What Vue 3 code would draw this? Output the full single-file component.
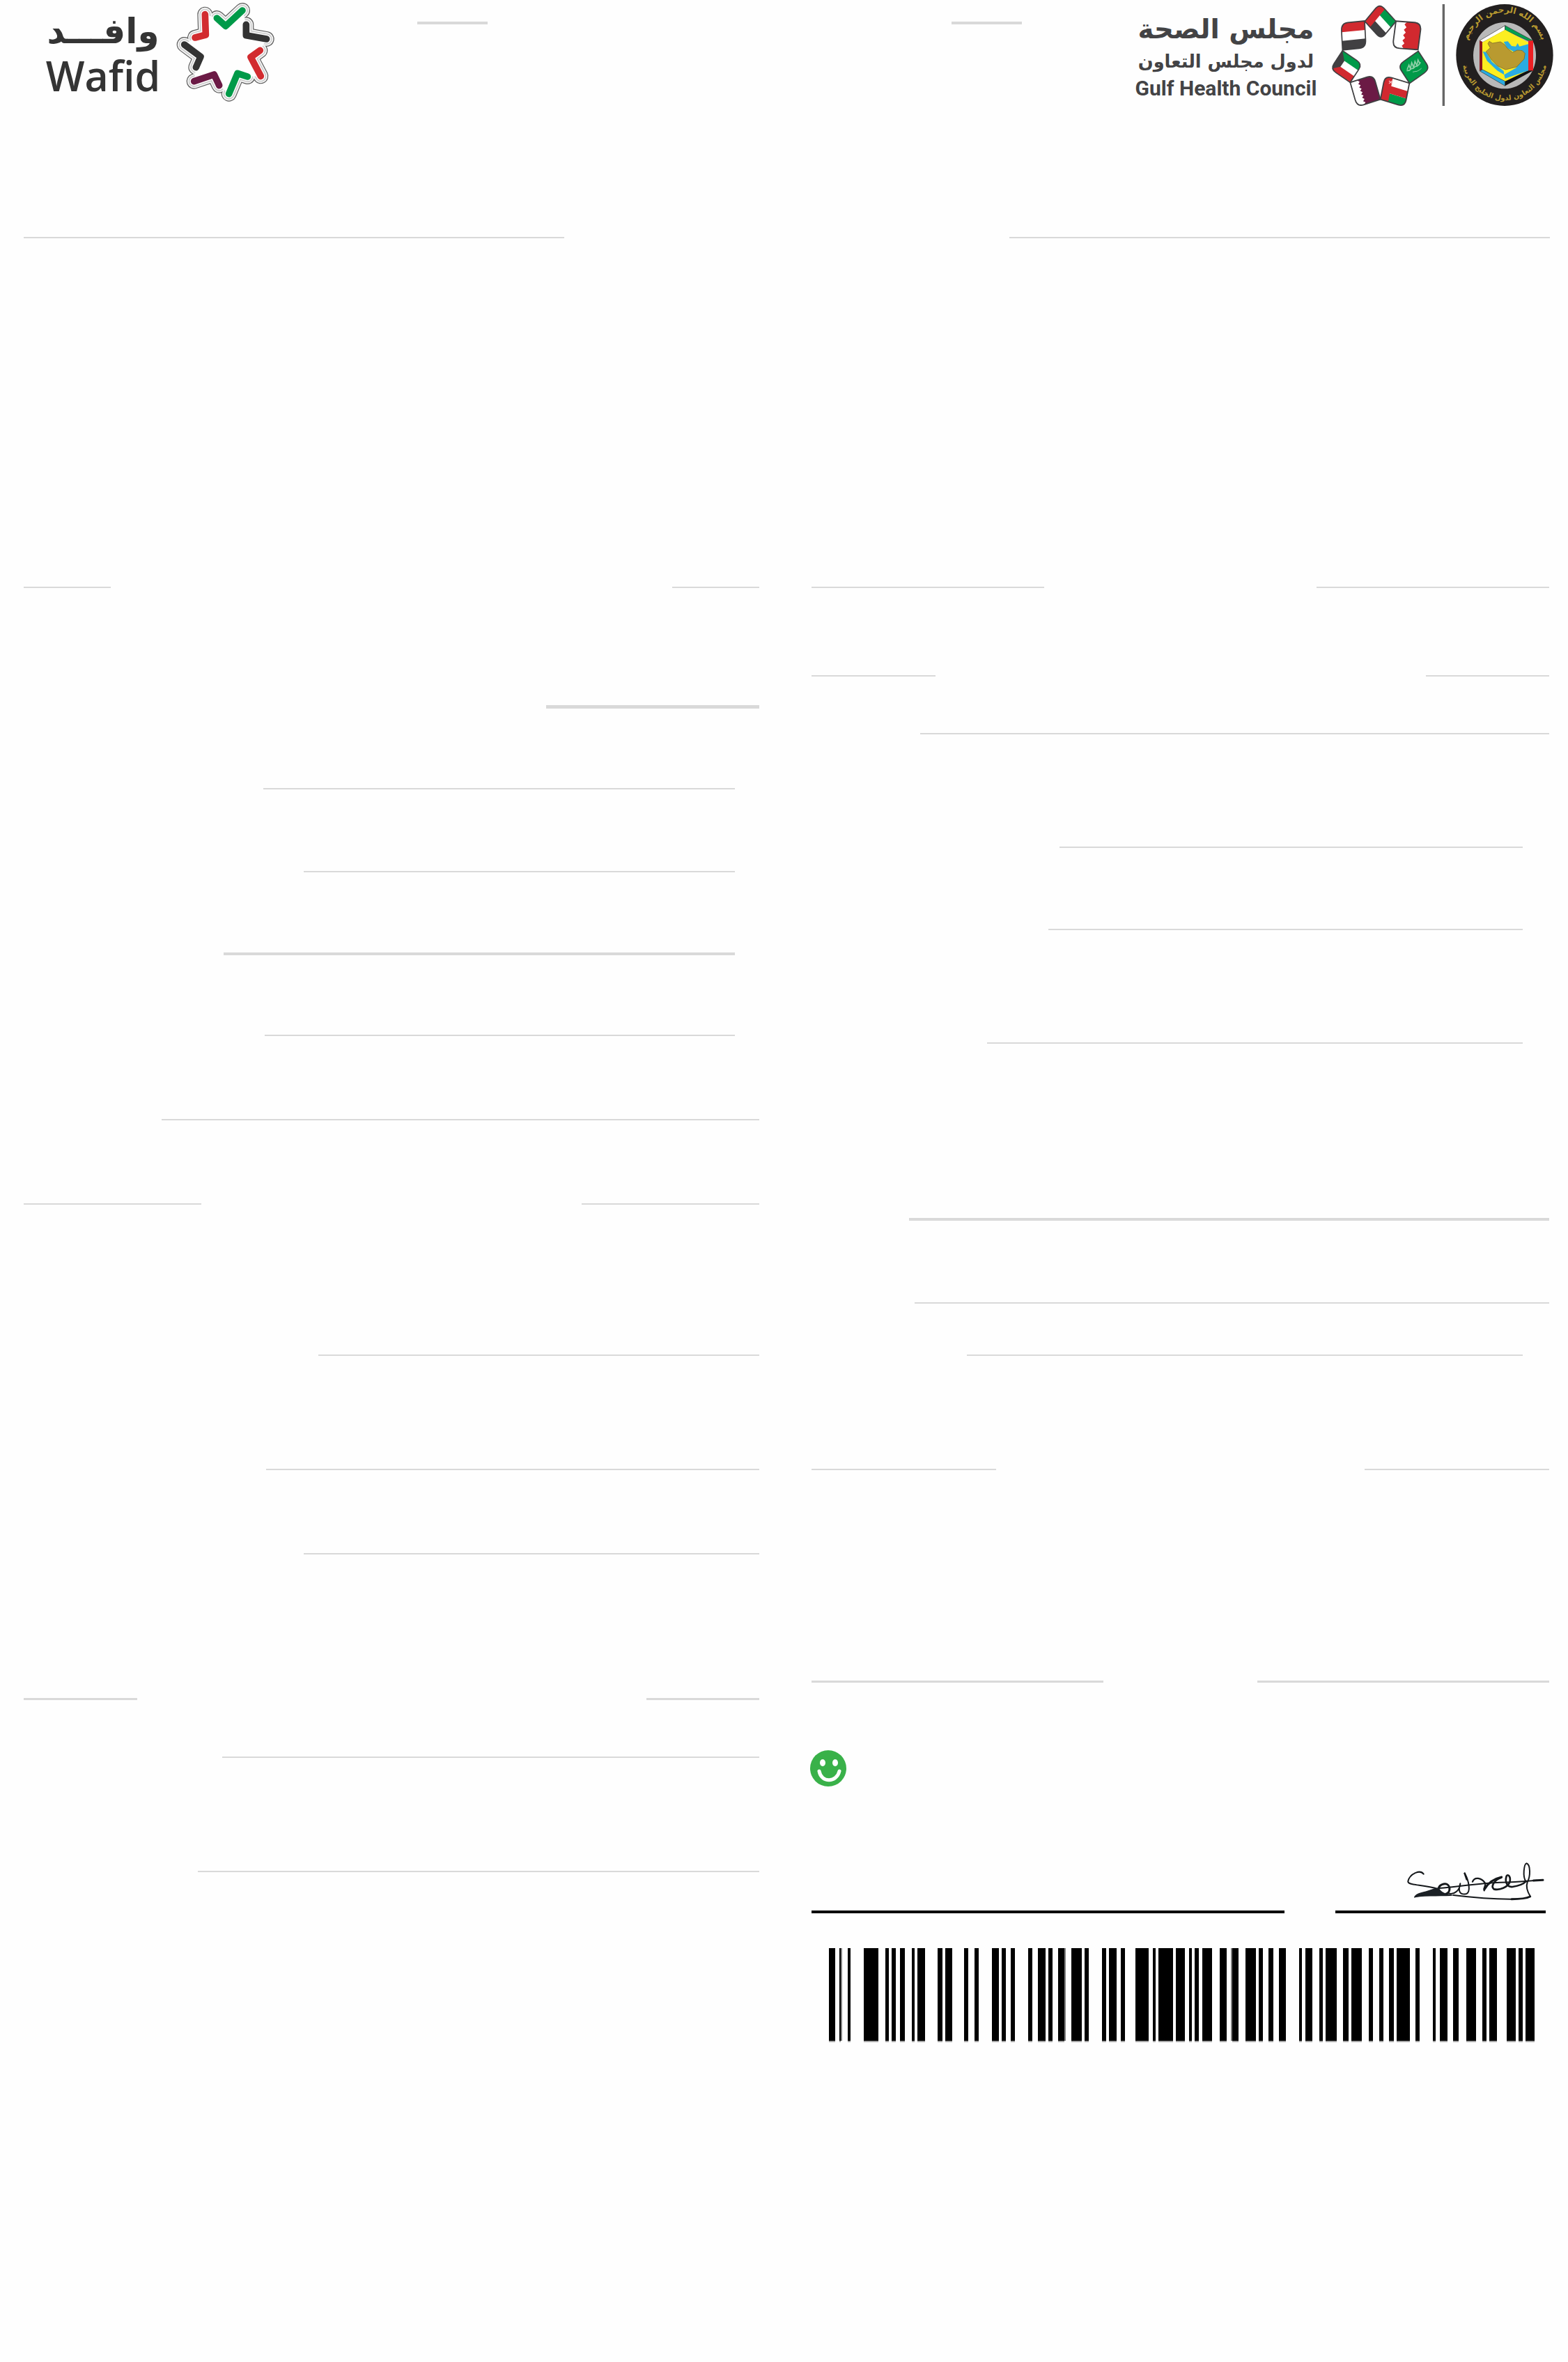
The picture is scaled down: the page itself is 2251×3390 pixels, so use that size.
<script setup>
// Blank form rows: `space` is the empty area above a rule, `weight` its thickness.
// A row with `title` leaves a centred opening; otherwise `lead` and `inset` trim the ends.
const leftRows = [
  { space: 500, weight: 2, title: 806 },
  { space: 168, weight: 5, lead: 750 },
  { space: 114, weight: 2, lead: 344, inset: 35 },
  { space: 117, weight: 2, lead: 402, inset: 35 },
  { space: 115, weight: 4, lead: 287, inset: 35 },
  { space: 114, weight: 2, lead: 346, inset: 35 },
  { space: 119, weight: 2, lead: 198 },
  { space: 119, weight: 2, title: 546 },
  { space: 215, weight: 2, lead: 423 },
  { space: 162, weight: 2, lead: 348 },
  { space: 119, weight: 2, lead: 402 },
  { space: 206, weight: 3, title: 731 },
  { space: 81, weight: 2, lead: 285 },
  { space: 162, weight: 2, lead: 250 },
]

const rightRows = [
  { space: 500, weight: 2, title: 391 },
  { space: 125, weight: 2, title: 704 },
  { space: 81, weight: 2, lead: 156 },
  { space: 161, weight: 2, lead: 356, inset: 38 },
  { space: 116, weight: 2, lead: 340, inset: 38 },
  { space: 161, weight: 2, lead: 252, inset: 38 },
  { space: 250, weight: 4, lead: 140 },
  { space: 117, weight: 2, lead: 148 },
  { space: 73, weight: 2, lead: 223, inset: 38 },
  { space: 162, weight: 2, title: 529 },
  { space: 302, weight: 3, title: 221 },
]

const columns = [leftRows, rightRows]

// Barcode bars as [start, end] in modules.
const bars = [
  [0, 9], [15, 17], [27, 31], [50, 71], [81, 86], [90, 96], [102, 109], [119, 123],
  [127, 138], [156, 163], [167, 177], [194, 200], [209, 215], [234, 244], [248, 254],
  [261, 267], [286, 292], [300, 311], [315, 321], [329, 338], [348, 363], [367, 373],
  [392, 398], [402, 413], [419, 425], [440, 459], [465, 469], [473, 494], [498, 511],
  [517, 521], [525, 531], [536, 550], [561, 571], [579, 588], [598, 613], [617, 623],
  [631, 638], [646, 656], [675, 679], [684, 694], [704, 709], [713, 729], [738, 746],
  [750, 765], [775, 781], [790, 796], [804, 811], [815, 834], [842, 848], [867, 871],
  [877, 888], [896, 904], [915, 929], [938, 944], [948, 959], [973, 986], [990, 996],
  [1000, 1013],
]
const softBars = [[17, 19], [338, 340], [577, 579]]

const chevrons = [
  { d: 'M763 62 L766 150 L720 162', color: '#d22b2f' },
  { d: 'M814 78 L852 112 L924 45', color: '#009a49' },
  { d: 'M940 106 L940 152 L1028 168', color: '#333333' },
  { d: 'M1000 217 L960 246 L1003 328', color: '#d22b2f' },
  { d: 'M946 330 L903 316 L866 404', color: '#009a49' },
  { d: 'M716 350 L802 321 L824 368', color: '#6b1a45' },
  { d: 'M674 192 L744 244 L724 290', color: '#333333' },
]
</script>

<template>
  <main class="page">
    <header class="header">
      <svg class="wafid" viewBox="0 0 1140 480" role="img" aria-label="Wafid">
        <text class="wafid-ar" x="324" y="186" text-anchor="middle">وافـــد</text>
        <text class="wafid-en" x="324" y="392" text-anchor="middle">Wafid</text>
        <g fill="none" stroke-linecap="round" stroke-linejoin="round">
          <path v-for="c in chevrons" :key="'o' + c.d" :d="c.d" stroke="#5c5c5c" stroke-width="66" />
          <path v-for="c in chevrons" :key="'g' + c.d" :d="c.d" stroke="#f4f4f4" stroke-width="59" />
          <path v-for="c in chevrons" :key="'m' + c.d" :d="c.d" stroke="#cccccc" stroke-width="48" />
          <path v-for="c in chevrons" :key="'w' + c.d" :d="c.d" stroke="#fefefe" stroke-width="38" />
        </g>
        <path fill="#fefefe" d="M720 162 L766 150 L763 62 L814 78 L852 112 L924 45 L940 106 L940 152 L1028 168 L1000 217 L960 246 L1003 328 L946 330 L903 316 L866 404 L824 368 L802 321 L716 350 L724 290 L744 244 L674 192Z" />
        <g fill="none" stroke-width="29" stroke-linejoin="round">
          <path v-for="c in chevrons" :key="c.d" :d="c.d" :stroke="c.color" stroke-linecap="round" />
        </g>
      </svg>

      <div class="header-rules">
        <hr class="dash" />
        <hr class="dash" />
      </div>

      <svg class="council" viewBox="-630 0 1863 510" role="img" aria-label="Gulf Health Council">
        <defs>
          <clipPath id="flag">
            <path d="M28 0 L100 0 L100 72 Q100 100 72 100 L0 100 L0 28 Q0 0 28 0Z" />
          </clipPath>
          <path id="flag-edge" d="M28 0 L100 0 L100 72 Q100 100 72 100 L0 100 L0 28 Q0 0 28 0Z" fill="none" stroke="#3f3f41" stroke-width="5" />
          <path id="ring-top" d="M797 190 A167 174 0 0 1 1123 190" />
          <path id="ring-bottom" d="M776 240 A184 192 0 0 0 1144 240" />
        </defs>

        <text class="council-ar big" x="-240" y="166" text-anchor="middle">مجلس الصحة</text>
        <text class="council-ar small" x="-240" y="292" text-anchor="middle">لدول مجلس التعاون</text>
        <text class="council-en" x="-240" y="410" text-anchor="middle">Gulf Health Council</text>

        <!-- United Arab Emirates -->
        <g transform="matrix(-.64 .77 .7 .77 422 15)">
          <g clip-path="url(#flag)">
            <path fill="#fff" d="M0 0H100V100H0z" />
            <path fill="#009a49" d="M0 0H34V100H0z" />
            <path fill="#414042" d="M66 0H100V100H66z" />
            <path fill="#d1292f" d="M0 0H100V32H0z" />
          </g>
          <use href="#flag-edge" />
        </g>
        <!-- Bahrain -->
        <g transform="matrix(-1.1 -.08 -.15 1.15 602 99)">
          <g clip-path="url(#flag)">
            <path fill="#fff" d="M0 0H100V100H0z" />
            <path fill="#d1292f" d="M0 0H56L65 10L56 20L65 30L56 40L65 50L56 60L65 70L56 80L65 90L56 100H0z" />
          </g>
          <use href="#flag-edge" />
        </g>
        <!-- Saudi Arabia -->
        <g transform="matrix(-.5 -.77 -.87 .62 638 297)">
          <g clip-path="url(#flag)"><path fill="#009a49" d="M0 0H100V100H0z" /></g>
          <use href="#flag-edge" />
        </g>
        <g fill="none" stroke="#8fd0a8" stroke-width="5">
          <path d="M540 300 l8 -20 l6 16 l6 -26 l8 20 l6 -26 l8 18 l5 -24 l8 16 M538 304 q12 2 20 -8 q10 0 18 -10 q12 0 22 -18" />
          <path stroke-width="3" d="M564 310 q22 0 38 -16" />
        </g>
        <!-- Oman -->
        <g transform="matrix(.2 -1.02 -1.05 -.32 530 460)">
          <g clip-path="url(#flag)">
            <path fill="#fff" d="M0 0H100V100H0z" />
            <path fill="#009a49" d="M0 0H35V100H0z" />
            <path fill="#d1292f" d="M35 0H66V100H35zM0 68H100V100H0z" />
          </g>
          <use href="#flag-edge" />
        </g>
        <path fill="none" stroke="#f3b8ba" stroke-width="4" d="M462 348l14 12m0-12l-14 12" />
        <!-- Qatar -->
        <g transform="matrix(1 -.32 -.3 -1.05 325 460)">
          <g clip-path="url(#flag)">
            <path fill="#fff" d="M0 0H100V100H0z" />
            <path fill="#6b1a45" d="M100 0H30L38 7L30 14L38 21L30 28L38 35L30 42L38 49L30 56L38 63L30 70L38 77L30 84L38 91L30 100H100z" />
          </g>
          <use href="#flag-edge" />
        </g>
        <!-- Kuwait -->
        <g transform="matrix(.85 .58 .52 -.79 210 297)">
          <g clip-path="url(#flag)">
            <path fill="#fff" d="M0 0H100V100H0z" />
            <path fill="#d1292f" d="M0 0H100V34H0z" />
            <path fill="#009a49" d="M0 66H100V100H0z" />
            <path fill="#414042" d="M0 0L30 34V66L0 100z" />
          </g>
          <use href="#flag-edge" />
        </g>
        <!-- Yemen -->
        <g transform="matrix(.06 1.15 1.01 -.1 256 100)">
          <g clip-path="url(#flag)">
            <path fill="#fff" d="M0 0H100V100H0z" />
            <path fill="#d1292f" d="M0 0H34V100H0z" />
            <path fill="#414042" d="M66 0H100V100H66z" />
          </g>
          <use href="#flag-edge" />
        </g>

        <path fill="#666" d="M692 18H702V456H692z" />

        <!-- Cooperation council emblem -->
        <ellipse cx="960" cy="237" rx="209" ry="219" fill="#221f1f" />
        <ellipse cx="960" cy="239" rx="135" ry="143" fill="#b9b9b9" />
        <text class="ring"><textPath href="#ring-top" startOffset="50%" text-anchor="middle">بسم الله الرحمن الرحيم</textPath></text>
        <text class="ring low"><textPath href="#ring-bottom" startOffset="50%" text-anchor="middle">مجلس التعاون لدول الخليج العربية</textPath></text>
        <path fill="#fff" stroke="#333" stroke-width="2" d="M852 175L962 110V130L866 182z" />
        <path fill="#00a050" stroke="#333" stroke-width="2" d="M962 110L1082 175H1060L962 130z" />
        <path fill="#fcee21" d="M962 128L1062 182V302L962 352L864 302V182z" />
        <path fill="#8b181b" d="M852 175L864 180V302L852 306z" />
        <path fill="#ed2024" d="M1062 175H1083V305H1062z" />
        <path fill="#2aace2" stroke="#333" stroke-width="2" d="M852 305L866 300L962 350V370z" />
        <path fill="#111" d="M962 370V350L1060 304H1083z" />
        <path fill="#2aace2" d="M956 180L974 178L990 198L1008 200L1016 186L1024 200L1062 190V304L962 338L958 322L1010 292L1046 230L1030 216L998 222L970 206zM866 222L880 224L906 266L956 306L958 322L928 304L884 262z" />
        <path fill="#b99a30" stroke="#6d5d28" stroke-width="2" d="M894 178L908 186L942 180L958 190L972 208L994 226L1014 216L1036 218L1048 230L1044 254L1012 288L964 300L930 284L904 258L880 222L898 206L888 188z" />
      </svg>
    </header>

    <div class="banner">
      <hr class="rule" />
      <span class="opening wide"></span>
      <hr class="rule" />
    </div>

    <div class="columns">
      <section v-for="(rows, index) in columns" :key="index" class="column">
        <div
          v-for="(row, i) in rows"
          :key="i"
          class="row"
          :style="{ marginTop: row.space + 'px', height: row.weight + 'px', paddingLeft: (row.lead || 0) + 'px', paddingRight: (row.inset || 0) + 'px' }"
        >
          <hr class="rule" />
          <template v-if="row.title">
            <span class="opening" :style="{ width: row.title + 'px' }"></span>
            <hr class="rule" />
          </template>
        </div>

        <template v-if="index === 1">
          <svg class="smiley" viewBox="0 0 53 53" role="img" aria-label="Fit">
            <circle cx="26" cy="26" r="26" fill="#39b149" />
            <ellipse cx="18" cy="18" rx="4" ry="5" fill="#fff" />
            <ellipse cx="36" cy="18" rx="4" ry="5" fill="#fff" />
            <path d="M13 30C16 47 38 47 42 30" fill="none" stroke="#fff" stroke-width="5" stroke-linecap="round" />
          </svg>

          <div class="sign-row">
            <div class="sign-field"></div>
            <div class="sign-field signed">
              <svg class="signature" viewBox="117 96 600 168" role="img" aria-label="Signature">
                <g fill="none" stroke="#15181b" stroke-width="6" stroke-linecap="round" stroke-linejoin="round">
                  <path d="M191 149C176 128 132 148 124 180C122 200 190 192 252 213" />
                  <path stroke-width="9" d="M254 216C258 190 296 182 302 206C306 226 294 236 276 236" />
                  <path d="M298 232C326 240 348 216 349 190C338 226 348 238 374 235C396 228 386 176 368 146" />
                  <path stroke-width="8" d="M368 146L377 172" />
                  <path d="M258 210C350 202 430 188 520 185C590 184 640 179 680 176" />
                  <path stroke-width="9" d="M664 177L705 175" />
                  <path stroke-width="7" d="M402 182C410 160 440 164 456 188C462 204 446 208 452 220" />
                  <path stroke-width="9" d="M454 214C470 184 500 168 527 162" />
                  <path stroke-width="8" d="M526 164C498 172 478 202 494 214C520 220 552 206 562 184C568 160 554 146 548 158C540 184 552 206 574 204C600 200 622 192 632 180" />
                  <path d="M632 182C616 160 624 106 634 103C652 108 652 158 638 184C630 206 640 228 651 246" />
                  <path d="M320 240C400 250 500 258 580 257" />
                  <path stroke-width="9" d="M570 257C604 257 634 254 650 246" />
                </g>
                <path fill="#1b2025" d="M150 251C150 240 166 232 190 226C216 220 240 208 258 208C262 228 292 236 326 241C280 248 196 240 150 251z" />
              </svg>
            </div>
          </div>

          <svg class="barcode" viewBox="0 0 1013 135" preserveAspectRatio="none" role="img" aria-label="Barcode">
            <g shape-rendering="crispEdges">
              <rect v-for="b in bars" :key="b[0]" :x="b[0]" y="0" :width="b[1] - b[0]" height="133" fill="#000" />
              <rect v-for="b in bars" :key="'f' + b[0]" :x="b[0]" y="133" :width="b[1] - b[0]" height="2" fill="#a8a8a8" />
              <rect v-for="b in softBars" :key="'s' + b[0]" :x="b[0]" y="0" :width="b[1] - b[0]" height="133" fill="#808080" />
            </g>
          </svg>
        </template>
      </section>
    </div>
  </main>
</template>

<style>
body {
  margin: 0;
  background: #fefefe;
}
</style>

<style scoped>
.page {
  min-height: 100vh;
  font-family: "Open Sans", "DejaVu Sans", sans-serif;
}

hr {
  margin: 0;
  border: 0;
  background: #d9d9d9;
}

.header {
  display: flex;
  align-items: flex-start;
  height: 170px;
}

.wafid {
  flex: none;
  width: 380px;
  height: 160px;
  margin-left: 40px;
}

.wafid text {
  fill: #343434;
}

.wafid-ar {
  font: 700 150px "DejaVu Sans", sans-serif;
}

.wafid-en {
  font: 600 177px "Open Sans", sans-serif;
}

.header-rules {
  display: flex;
  flex: 1;
  justify-content: space-between;
  padding: 31px 163px 0 179px;
}

.dash {
  width: 101px;
  height: 4px;
}

.council {
  flex: none;
  width: 621px;
  height: 170px;
}

.council text {
  fill: #434345;
}

.council-ar {
  font-family: "DejaVu Sans", sans-serif;
  font-weight: 700;
}

.big {
  font-size: 116px;
}

.small {
  font-size: 77px;
}

.council-en {
  font: 700 90px Roboto, sans-serif;
}

.council .ring {
  font: 700 36px "DejaVu Sans", sans-serif;
  fill: #b99a30;
}

.council .low {
  font-size: 30px;
}

.banner {
  display: flex;
  height: 2px;
  margin: 170px 26px 0 34px;
}

.rule {
  flex: 1;
  height: 100%;
}

.opening {
  flex: none;
}

.wide {
  width: 639px;
}

.columns {
  display: grid;
  grid-template-columns: 1056fr 1059fr;
  column-gap: 75px;
  padding: 0 27px 0 34px;
}

.row {
  display: flex;
}

.smiley {
  display: block;
  width: 53px;
  height: 53px;
  margin: 97px 0 0 -2px;
}

.sign-row {
  display: flex;
  gap: 73px;
  height: 181px;
  margin-right: 5px;
}

.sign-field {
  flex: 1;
  box-sizing: border-box;
  border-bottom: 4px solid #000;
}

.signed {
  display: flex;
  flex: 0 0 302px;
  align-items: flex-end;
  justify-content: flex-end;
}

.signature {
  width: 200px;
  height: 56px;
  margin-bottom: 14px;
}

.barcode {
  display: block;
  width: calc(100% - 46px);
  height: 135px;
  margin: 50px 21px 0 25px;
}
</style>
